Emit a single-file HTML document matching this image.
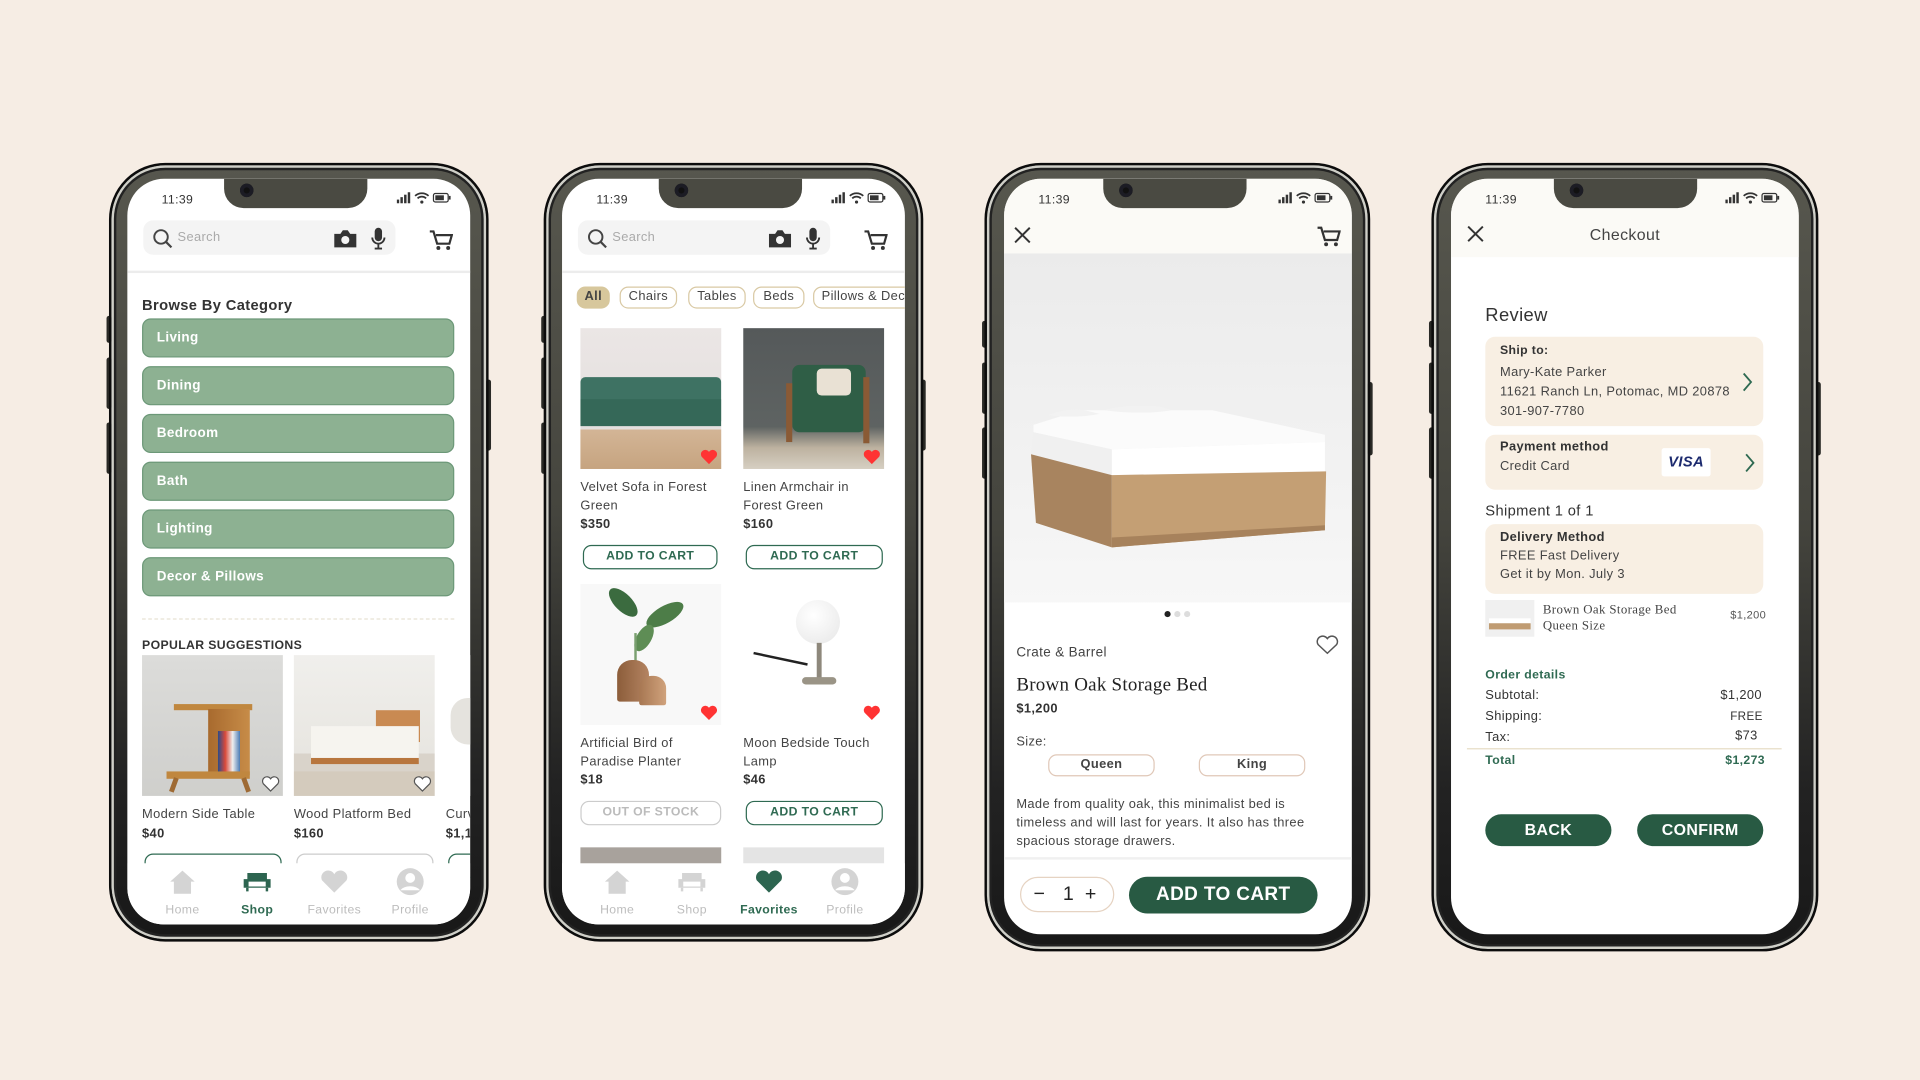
<!DOCTYPE html>
<html><head><meta charset="utf-8"><style>
*{margin:0;padding:0;box-sizing:border-box}
html,body{width:1920px;height:1080px;overflow:hidden;background:#f6ede4}
body{font-family:"Liberation Sans",sans-serif;color:#333}
#c{position:absolute;left:0;top:0;width:1568px;height:882px;transform:scale(1.22449);transform-origin:0 0}
.ph{position:absolute;border-radius:46px;background:linear-gradient(180deg,#57574e 0%,#45453e 45%,#222 80%,#181818 100%);border:2px solid #0c0c0c;box-shadow:inset 0 0 0 2px #cfcfc8,inset 0 0 0 4px #222}
.sb{position:absolute;background:#2a2a26;border-radius:2px}
.sc{position:absolute;background:#fff;border-radius:30px;overflow:hidden;letter-spacing:0.3px}
.a{position:absolute;white-space:nowrap}
.notch{position:absolute;top:0;height:24px;width:117px;background:#4a4a42;border-radius:0 0 16px 16px}
.cam{position:absolute;top:4px;width:11px;height:11px;border-radius:50%;background:#111;box-shadow:inset 0 0 0 3px #1c1c24}
.time{font-size:10px;color:#333;top:12px}
.srch{position:absolute;background:#f4f4f4;border-radius:8px;height:28px}
.gb{position:absolute;left:12px;width:255px;height:32px;background:#8db192;border:1.5px solid #6c9878;border-radius:7px;color:#fff;font-weight:bold;font-size:11px;padding:9px 0 0 11px}
.nav{position:absolute;left:0;right:0;top:559px;bottom:0;background:#fff}
.nl{position:absolute;top:33px;font-size:10px;color:#bdbdbd;transform:translateX(-50%)}
.img{position:absolute;overflow:hidden}
.pn{font-size:10.5px;color:#444;line-height:15px}
.pp{font-size:10.5px;font-weight:bold;color:#333}
.ob{position:absolute;height:20px;border:1.5px solid #2f6a52;border-radius:7px;color:#2f6a52;font-weight:bold;font-size:10px;text-align:center;line-height:17px}
.chip{position:absolute;top:88px;height:18px;border:1.5px solid #d9c9a4;border-radius:7px;font-size:10.5px;text-align:center;line-height:15px;color:#444}
.box{position:absolute;left:28px;width:227px;background:#f8efe3;border-radius:8px}
.g{color:#2f6a52}
.btn{position:absolute;height:26px;background:#285a43;color:#fff;border-radius:13px;font-weight:bold;text-align:center}
</style></head><body><div id="c">

<div class="sb" style="left:87px;top:258px;width:4px;height:22px"></div>
<div class="sb" style="left:87px;top:292px;width:4px;height:42px"></div>
<div class="sb" style="left:87px;top:345px;width:4px;height:42px"></div>
<div class="sb" style="left:397px;top:310px;width:4px;height:58px"></div>
<div class="sb" style="left:442px;top:258px;width:4px;height:22px"></div>
<div class="sb" style="left:442px;top:292px;width:4px;height:42px"></div>
<div class="sb" style="left:442px;top:345px;width:4px;height:42px"></div>
<div class="sb" style="left:752px;top:310px;width:4px;height:58px"></div>
<div class="sb" style="left:802px;top:262px;width:4px;height:22px"></div>
<div class="sb" style="left:802px;top:296px;width:4px;height:42px"></div>
<div class="sb" style="left:802px;top:349px;width:4px;height:42px"></div>
<div class="sb" style="left:1117px;top:312px;width:4px;height:60px"></div>
<div class="sb" style="left:1167px;top:262px;width:4px;height:22px"></div>
<div class="sb" style="left:1167px;top:296px;width:4px;height:42px"></div>
<div class="sb" style="left:1167px;top:349px;width:4px;height:42px"></div>
<div class="sb" style="left:1483px;top:312px;width:4px;height:60px"></div>

<!-- PHONE 1 -->
<div class="ph" style="left:89px;top:133px;width:310px;height:636px"></div>
<div class="sc" style="left:104px;top:146px;width:280px;height:609px">
 <div class="notch" style="left:79px"></div><div class="cam" style="left:92px"></div>
 <div class="a time" style="left:28px">11:39</div>
 <svg class="a" style="left:220px;top:10px" width="46" height="12" viewBox="0 0 46 12"><rect x="0" y="7" width="2" height="3" fill="#333"/><rect x="3" y="5" width="2" height="5" fill="#333"/><rect x="6" y="3" width="2" height="7" fill="#333"/><rect x="9" y="1" width="2" height="9" fill="#333"/><path d="M15 4a8 8 0 0 1 11 0M17 6a5 5 0 0 1 7 0" stroke="#333" stroke-width="1.4" fill="none"/><circle cx="20.5" cy="9" r="1.3" fill="#333"/><rect x="30" y="2" width="12" height="7" rx="1.5" fill="none" stroke="#333"/><rect x="31.5" y="3.5" width="7" height="4" fill="#333"/><rect x="42.5" y="4" width="1.5" height="3" fill="#333"/></svg>
 <div class="srch" style="left:13px;top:34px;width:206px"></div>
 <svg class="a" style="left:20px;top:40px" width="18" height="18"><circle cx="7.5" cy="7.5" r="5.5" stroke="#444" stroke-width="1.6" fill="none"/><path d="M11.5 11.5L16 16" stroke="#444" stroke-width="1.8"/></svg>
 <div class="a" style="left:41px;top:42px;font-size:10.5px;color:#aaa">Search</div>
 <svg class="a" style="left:168px;top:41px" width="20" height="16"><path d="M1 4h5l2-3h4l2 3h5v11H1z" fill="#333"/><circle cx="10" cy="9" r="3.3" fill="#f4f4f4"/></svg>
 <svg class="a" style="left:198px;top:39px" width="14" height="20"><rect x="4" y="1" width="6" height="11" rx="3" fill="#333"/><path d="M2 9a5 5 0 0 0 10 0M7 14v4M4 18h6" stroke="#333" stroke-width="1.5" fill="none"/></svg>
 <svg class="a" style="left:246px;top:41px" width="20" height="18"><path d="M1 2h3l3 10h10l2-7H6" stroke="#333" stroke-width="1.8" fill="none"/><circle cx="8" cy="15.5" r="1.6" fill="#333"/><circle cx="16" cy="15.5" r="1.6" fill="#333"/></svg>
 <div class="a" style="left:0;top:75px;width:280px;height:2px;background:#ececec"></div>
 <div class="a" style="left:12px;top:96px;font-size:12px;font-weight:bold;color:#333">Browse By Category</div>
 <div class="gb" style="top:114px">Living</div>
 <div class="gb" style="top:153px">Dining</div>
 <div class="gb" style="top:192px">Bedroom</div>
 <div class="gb" style="top:231px">Bath</div>
 <div class="gb" style="top:270px">Lighting</div>
 <div class="gb" style="top:309px">Decor &amp; Pillows</div>
 <div class="a" style="left:12px;top:359px;width:255px;border-top:1px dashed #e8e2d4"></div>
 <div class="a" style="left:12px;top:376px;font-size:10px;font-weight:bold;color:#333">POPULAR SUGGESTIONS</div>
 <div class="img" style="left:12px;top:389px;width:115px;height:115px;background:linear-gradient(#dcdcda,#cfcfcc)">
  <div class="a" style="left:26px;top:40px;width:64px;height:5px;background:#c0873f"></div>
  <div class="a" style="left:54px;top:44px;width:34px;height:54px;background:linear-gradient(90deg,#a86a2e,#c78c48)"></div>
  <div class="a" style="left:20px;top:95px;width:68px;height:6px;background:#c0873f"></div>
  <div class="a" style="left:62px;top:62px;width:18px;height:33px;background:linear-gradient(90deg,#2b4b8a,#d94a3a,#eee,#4b7bb5)"></div>
  <div class="a" style="left:24px;top:100px;width:4px;height:12px;background:#9e6a34;transform:rotate(20deg)"></div>
  <div class="a" style="left:83px;top:100px;width:4px;height:12px;background:#9e6a34;transform:rotate(-20deg)"></div>
  <svg class="a" style="left:97px;top:98px" width="16" height="14"><path d="M8 13L2 7a3.3 3.3 0 0 1 6-4 3.3 3.3 0 0 1 6 4z" fill="#fff" stroke="#555" stroke-width="1"/></svg>
 </div>
 <div class="img" style="left:136px;top:389px;width:115px;height:115px;background:linear-gradient(#f0efec 0,#e8e6e1 70%,#d9d3ca 70%)">
  <div class="a" style="left:67px;top:45px;width:36px;height:26px;background:#c98a52"></div>
  <div class="a" style="left:14px;top:58px;width:88px;height:28px;background:#f6f4ef"></div>
  <div class="a" style="left:14px;top:84px;width:88px;height:5px;background:#b8763e"></div>
  <div class="a" style="left:0;top:95px;width:115px;height:20px;background:#d4cbbd"></div>
  <svg class="a" style="left:97px;top:98px" width="16" height="14"><path d="M8 13L2 7a3.3 3.3 0 0 1 6-4 3.3 3.3 0 0 1 6 4z" fill="#fff" stroke="#555" stroke-width="1"/></svg>
 </div>
 <div class="img" style="left:260px;top:389px;width:30px;height:115px;background:#fff"><div class="a" style="left:4px;top:35px;width:30px;height:38px;border-radius:14px;background:#e5e3de"></div></div>
 <div class="a pn" style="left:12px;top:512px">Modern Side Table</div>
 <div class="a pp" style="left:12px;top:529px">$40</div>
 <div class="a pn" style="left:136px;top:512px">Wood Platform Bed</div>
 <div class="a pp" style="left:136px;top:529px">$160</div>
 <div class="a pn" style="left:260px;top:512px">Curv</div>
 <div class="a pp" style="left:260px;top:529px">$1,100</div>
 <div class="ob" style="left:14px;top:551px;width:112px"></div>
 <div class="ob" style="left:138px;top:551px;width:112px;border-color:#ccc"></div>
 <div class="ob" style="left:262px;top:551px;width:40px"></div>
 <div class="nav">
  <svg class="a" style="left:34px;top:5px" width="22" height="20"><path d="M11 1L1 10h3v10h14V10h3z" fill="#d4d4d4"/></svg>
  <div class="nl" style="left:45px">Home</div>
  <svg class="a" style="left:94px;top:6px" width="24" height="18"><path d="M4 2h16v7H4z M1 7h4v6h14V7h4v7H1z" fill="#2d6550"/><path d="M4 14v3M20 14v3" stroke="#2d6550" stroke-width="2"/></svg>
  <div class="nl g" style="left:106px;font-weight:bold">Shop</div>
  <svg class="a" style="left:157px;top:5px" width="24" height="20"><path d="M12 19L2 9a5 5 0 0 1 10-5 5 5 0 0 1 10 5z" fill="#d4d4d4"/></svg>
  <div class="nl" style="left:169px">Favorites</div>
  <svg class="a" style="left:219px;top:3px" width="24" height="24"><circle cx="12" cy="12" r="11" fill="#d4d4d4"/><circle cx="12" cy="9" r="4" fill="#fff"/><path d="M4 19a9 6 0 0 1 16 0" fill="#fff"/></svg>
  <div class="nl" style="left:231px">Profile</div>
 </div>
</div>

<!-- PHONE 2 -->
<div class="ph" style="left:444px;top:133px;width:310px;height:636px"></div>
<div class="sc" style="left:459px;top:146px;width:280px;height:609px">
 <div class="notch" style="left:79px"></div><div class="cam" style="left:92px"></div>
 <div class="a time" style="left:28px">11:39</div>
 <svg class="a" style="left:220px;top:10px" width="46" height="12" viewBox="0 0 46 12"><rect x="0" y="7" width="2" height="3" fill="#333"/><rect x="3" y="5" width="2" height="5" fill="#333"/><rect x="6" y="3" width="2" height="7" fill="#333"/><rect x="9" y="1" width="2" height="9" fill="#333"/><path d="M15 4a8 8 0 0 1 11 0M17 6a5 5 0 0 1 7 0" stroke="#333" stroke-width="1.4" fill="none"/><circle cx="20.5" cy="9" r="1.3" fill="#333"/><rect x="30" y="2" width="12" height="7" rx="1.5" fill="none" stroke="#333"/><rect x="31.5" y="3.5" width="7" height="4" fill="#333"/><rect x="42.5" y="4" width="1.5" height="3" fill="#333"/></svg>
 <div class="srch" style="left:13px;top:34px;width:206px"></div>
 <svg class="a" style="left:20px;top:40px" width="18" height="18"><circle cx="7.5" cy="7.5" r="5.5" stroke="#444" stroke-width="1.6" fill="none"/><path d="M11.5 11.5L16 16" stroke="#444" stroke-width="1.8"/></svg>
 <div class="a" style="left:41px;top:42px;font-size:10.5px;color:#aaa">Search</div>
 <svg class="a" style="left:168px;top:41px" width="20" height="16"><path d="M1 4h5l2-3h4l2 3h5v11H1z" fill="#333"/><circle cx="10" cy="9" r="3.3" fill="#f4f4f4"/></svg>
 <svg class="a" style="left:198px;top:39px" width="14" height="20"><rect x="4" y="1" width="6" height="11" rx="3" fill="#333"/><path d="M2 9a5 5 0 0 0 10 0M7 14v4M4 18h6" stroke="#333" stroke-width="1.5" fill="none"/></svg>
 <svg class="a" style="left:246px;top:41px" width="20" height="18"><path d="M1 2h3l3 10h10l2-7H6" stroke="#333" stroke-width="1.8" fill="none"/><circle cx="8" cy="15.5" r="1.6" fill="#333"/><circle cx="16" cy="15.5" r="1.6" fill="#333"/></svg>
 <div class="a" style="left:0;top:75px;width:280px;height:2px;background:#ececec"></div>
 <div class="chip" style="left:12px;width:27px;background:#d7c79c;border-color:#d7c79c;font-weight:bold">All</div>
 <div class="chip" style="left:47px;width:47px">Chairs</div>
 <div class="chip" style="left:103px;width:47px">Tables</div>
 <div class="chip" style="left:156px;width:42px">Beds</div>
 <div class="chip" style="left:205px;width:92px;text-align:left;padding-left:6px">Pillows &amp; Decor</div>
 <div class="img" style="left:15px;top:122px;width:115px;height:115px;background:linear-gradient(#ebe6e5 0,#e4dfde 72%,#d3b596 72%,#c6a480)">
  <div class="a" style="left:0;top:40px;width:115px;height:36px;background:#3e7263;border-radius:4px 4px 0 0"></div>
  <div class="a" style="left:0;top:58px;width:115px;height:22px;background:#356858"></div>
  <svg class="a" style="left:97px;top:98px" width="16" height="14"><path d="M8 13L2 7a3.3 3.3 0 0 1 6-4 3.3 3.3 0 0 1 6 4z" fill="#f33"/></svg>
 </div>
 <div class="img" style="left:148px;top:122px;width:115px;height:115px;background:linear-gradient(#55595a 0,#5e6362 70%,#bdb2a0 85%,#d6cfc2)">
  <div class="a" style="left:40px;top:30px;width:60px;height:55px;background:#2f5e46;border-radius:6px"></div>
  <div class="a" style="left:60px;top:33px;width:28px;height:22px;background:#e9e1d4;border-radius:4px"></div>
  <div class="a" style="left:35px;top:45px;width:5px;height:48px;background:#8a5a35"></div>
  <div class="a" style="left:98px;top:40px;width:5px;height:54px;background:#8a5a35"></div>
  <svg class="a" style="left:97px;top:98px" width="16" height="14"><path d="M8 13L2 7a3.3 3.3 0 0 1 6-4 3.3 3.3 0 0 1 6 4z" fill="#f33"/></svg>
 </div>
 <div class="a pn" style="left:15px;top:245px">Velvet Sofa in Forest<br>Green</div>
 <div class="a pp" style="left:15px;top:276px">$350</div>
 <div class="a pn" style="left:148px;top:245px">Linen Armchair in<br>Forest Green</div>
 <div class="a pp" style="left:148px;top:276px">$160</div>
 <div class="ob" style="left:17px;top:299px;width:110px">ADD TO CART</div>
 <div class="ob" style="left:150px;top:299px;width:112px">ADD TO CART</div>
 <div class="img" style="left:15px;top:331px;width:115px;height:115px;background:#f8f8f8">
  <div class="a" style="left:20px;top:8px;width:30px;height:14px;background:#3b6b3f;border-radius:50%;transform:rotate(45deg)"></div>
  <div class="a" style="left:52px;top:18px;width:34px;height:14px;background:#4d7d48;border-radius:50%;transform:rotate(-30deg)"></div>
  <div class="a" style="left:40px;top:38px;width:24px;height:12px;background:#5e8d55;border-radius:50%;transform:rotate(-60deg)"></div>
  <div class="a" style="left:44px;top:40px;width:2px;height:50px;background:#7aa070"></div>
  <div class="a" style="left:30px;top:62px;width:26px;height:34px;background:linear-gradient(90deg,#8c5d3a,#b48462);border-radius:12px 12px 2px 2px"></div>
  <div class="a" style="left:48px;top:75px;width:22px;height:24px;background:linear-gradient(90deg,#a77752,#d0a27c);border-radius:10px 10px 2px 2px"></div>
  <svg class="a" style="left:97px;top:98px" width="16" height="14"><path d="M8 13L2 7a3.3 3.3 0 0 1 6-4 3.3 3.3 0 0 1 6 4z" fill="#f33"/></svg>
 </div>
 <div class="img" style="left:148px;top:331px;width:115px;height:115px;background:#fff">
  <div class="a" style="left:43px;top:13px;width:36px;height:36px;border-radius:50%;background:radial-gradient(circle at 40% 35%,#fff,#e6e6e6)"></div>
  <div class="a" style="left:60px;top:48px;width:4px;height:30px;background:#8e887c"></div>
  <div class="a" style="left:48px;top:76px;width:28px;height:6px;border-radius:3px;background:#9a9486"></div>
  <div class="a" style="left:8px;top:60px;width:45px;height:1.5px;background:#222;transform:rotate(12deg)"></div>
  <svg class="a" style="left:97px;top:98px" width="16" height="14"><path d="M8 13L2 7a3.3 3.3 0 0 1 6-4 3.3 3.3 0 0 1 6 4z" fill="#f33"/></svg>
 </div>
 <div class="a pn" style="left:15px;top:454px">Artificial Bird of<br>Paradise Planter</div>
 <div class="a pp" style="left:15px;top:485px">$18</div>
 <div class="a pn" style="left:148px;top:454px">Moon Bedside Touch<br>Lamp</div>
 <div class="a pp" style="left:148px;top:485px">$46</div>
 <div class="ob" style="left:15px;top:508px;width:115px;border-color:#ccc;color:#bbb">OUT OF STOCK</div>
 <div class="ob" style="left:150px;top:508px;width:112px">ADD TO CART</div>
 <div class="img" style="left:15px;top:546px;width:115px;height:20px;background:#a8a29c"></div>
 <div class="img" style="left:148px;top:546px;width:115px;height:20px;background:#e4e4e4"></div>
 <div class="nav">
  <svg class="a" style="left:34px;top:5px" width="22" height="20"><path d="M11 1L1 10h3v10h14V10h3z" fill="#d4d4d4"/></svg>
  <div class="nl" style="left:45px">Home</div>
  <svg class="a" style="left:94px;top:6px" width="24" height="18"><path d="M4 2h16v7H4z M1 7h4v6h14V7h4v7H1z" fill="#d4d4d4"/><path d="M4 14v3M20 14v3" stroke="#d4d4d4" stroke-width="2"/></svg>
  <div class="nl" style="left:106px">Shop</div>
  <svg class="a" style="left:157px;top:5px" width="24" height="20"><path d="M12 19L2 9a5 5 0 0 1 10-5 5 5 0 0 1 10 5z" fill="#2d6550"/></svg>
  <div class="nl g" style="left:169px;font-weight:bold">Favorites</div>
  <svg class="a" style="left:219px;top:3px" width="24" height="24"><circle cx="12" cy="12" r="11" fill="#d4d4d4"/><circle cx="12" cy="9" r="4" fill="#fff"/><path d="M4 19a9 6 0 0 1 16 0" fill="#fff"/></svg>
  <div class="nl" style="left:231px">Profile</div>
 </div>
</div>

<!-- PHONE 3 -->
<div class="ph" style="left:804px;top:133px;width:315px;height:644px"></div>
<div class="sc" style="left:820px;top:146px;width:284px;height:617px">
 <div class="a" style="left:0;top:0;width:284px;height:61px;background:#fbfaf6"></div>
 <div class="notch" style="left:81px;background:#4a4a42"></div><div class="cam" style="left:94px"></div>
 <div class="a time" style="left:28px">11:39</div>
 <svg class="a" style="left:224px;top:10px" width="46" height="12" viewBox="0 0 46 12"><rect x="0" y="7" width="2" height="3" fill="#333"/><rect x="3" y="5" width="2" height="5" fill="#333"/><rect x="6" y="3" width="2" height="7" fill="#333"/><rect x="9" y="1" width="2" height="9" fill="#333"/><path d="M15 4a8 8 0 0 1 11 0M17 6a5 5 0 0 1 7 0" stroke="#333" stroke-width="1.4" fill="none"/><circle cx="20.5" cy="9" r="1.3" fill="#333"/><rect x="30" y="2" width="12" height="7" rx="1.5" fill="none" stroke="#333"/><rect x="31.5" y="3.5" width="7" height="4" fill="#333"/><rect x="42.5" y="4" width="1.5" height="3" fill="#333"/></svg>
 <svg class="a" style="left:8px;top:39px" width="14" height="14"><path d="M1 1l12 12M13 1L1 13" stroke="#333" stroke-width="1.6"/></svg>
 <svg class="a" style="left:255px;top:38px" width="20" height="18"><path d="M1 2h3l3 10h10l2-7H6" stroke="#333" stroke-width="1.8" fill="none"/><circle cx="8" cy="15.5" r="1.6" fill="#333"/><circle cx="16" cy="15.5" r="1.6" fill="#333"/></svg>
 <div class="a" style="left:0;top:61px;width:284px;height:285px;background:linear-gradient(#ebebeb,#f3f3f3 70%,#f7f7f7)">
  <svg class="a" style="left:0;top:0" width="284" height="285" viewBox="0 0 284 285">
   <path d="M24 140L62 128 170 128 262 148 262 154 88 160 24 146z" fill="#fbfbfb"/>
   <path d="M36 132q15-6 30-4l12 3q-20 4-42 1z" fill="#f2f2f2"/>
   <path d="M82 128q15-5 45-3l10 3q-25 4-55 0z" fill="#f2f2f2"/>
   <path d="M24 146L88 160 88 181 22 164z" fill="#f0f0f0"/>
   <path d="M88 160L262 154 262 178 88 181z" fill="#ffffff"/>
   <path d="M22 164L88 181 88 240 26 220z" fill="#a8845f"/>
   <path d="M88 181L263 178 262 226 88 240z" fill="#c49f74"/>
   <path d="M88 232L262 222 262 226 88 240z" fill="#a7825c"/>
  </svg>
 </div>
 <div class="a" style="left:131px;top:353px;width:5px;height:5px;border-radius:50%;background:#222"></div>
 <div class="a" style="left:139px;top:353px;width:5px;height:5px;border-radius:50%;background:#ddd"></div>
 <div class="a" style="left:147px;top:353px;width:5px;height:5px;border-radius:50%;background:#ddd"></div>
 <div class="a" style="left:10px;top:381px;font-size:11px;color:#444">Crate &amp; Barrel</div>
 <svg class="a" style="left:254px;top:372px" width="20" height="17"><path d="M10 15.5L2.5 8.5a4 4 0 0 1 7.5-5 4 4 0 0 1 7.5 5z" fill="none" stroke="#555" stroke-width="1.2"/></svg>
 <div class="a" style="left:10px;top:405px;font-size:15.5px;font-family:'Liberation Serif',serif;color:#222;letter-spacing:0.2px">Brown Oak Storage Bed</div>
 <div class="a pp" style="left:10px;top:427px;font-size:10.5px">$1,200</div>
 <div class="a" style="left:10px;top:454px;font-size:10.5px;color:#444">Size:</div>
 <div class="chip" style="left:36px;top:470px;width:87px;border-color:#e0c8b8;font-weight:bold;font-size:10.5px">Queen</div>
 <div class="chip" style="left:159px;top:470px;width:87px;border-color:#e0c8b8;font-weight:bold;font-size:10.5px">King</div>
 <div class="a" style="left:10px;top:504px;font-size:10.5px;line-height:15px;color:#444;white-space:normal;width:258px">Made from quality oak, this minimalist bed is timeless and will last for years. It also has three spacious storage drawers.</div>
 <div class="a" style="left:0;top:554px;width:284px;height:2px;background:#f0f0f0"></div>
 <div class="a" style="left:13px;top:570px;width:77px;height:29px;border:1.2px solid #e6d3c2;border-radius:15px;font-size:16px;color:#222;line-height:27px"><span style="position:absolute;left:10px">&minus;</span><span style="position:absolute;left:34px">1</span><span style="position:absolute;left:52px">+</span></div>
 <div class="btn" style="left:102px;top:570px;width:154px;height:30px;border-radius:15px;font-size:15.5px;line-height:30px">ADD TO CART</div>
</div>

<!-- PHONE 4 -->
<div class="ph" style="left:1169px;top:133px;width:316px;height:644px"></div>
<div class="sc" style="left:1185px;top:146px;width:284px;height:617px">
 <div class="a" style="left:0;top:0;width:284px;height:64px;background:#fbfaf6"></div>
 <div class="notch" style="left:84px;background:#4a4a42"></div><div class="cam" style="left:97px"></div>
 <div class="a time" style="left:28px">11:39</div>
 <svg class="a" style="left:224px;top:10px" width="46" height="12" viewBox="0 0 46 12"><rect x="0" y="7" width="2" height="3" fill="#333"/><rect x="3" y="5" width="2" height="5" fill="#333"/><rect x="6" y="3" width="2" height="7" fill="#333"/><rect x="9" y="1" width="2" height="9" fill="#333"/><path d="M15 4a8 8 0 0 1 11 0M17 6a5 5 0 0 1 7 0" stroke="#333" stroke-width="1.4" fill="none"/><circle cx="20.5" cy="9" r="1.3" fill="#333"/><rect x="30" y="2" width="12" height="7" rx="1.5" fill="none" stroke="#333"/><rect x="31.5" y="3.5" width="7" height="4" fill="#333"/><rect x="42.5" y="4" width="1.5" height="3" fill="#333"/></svg>
 <svg class="a" style="left:13px;top:38px" width="14" height="14"><path d="M1 1l12 12M13 1L1 13" stroke="#333" stroke-width="1.6"/></svg>
 <div class="a" style="left:0;width:284px;text-align:center;top:38px;font-size:13px;color:#444">Checkout</div>
 <div class="a" style="left:28px;top:103px;font-size:15px;color:#333">Review</div>
 <div class="box" style="top:129px;height:73px"></div>
 <div class="a" style="left:40px;top:135px;font-size:10px;font-weight:bold;color:#333">Ship to:</div>
 <div class="a" style="left:40px;top:150px;font-size:10.5px;line-height:16px;color:#444">Mary-Kate Parker<br>11621 Ranch Ln, Potomac, MD 20878<br>301-907-7780</div>
 <svg class="a" style="left:237px;top:158px" width="10" height="16"><path d="M2 1l6 7-6 7" stroke="#2f6a52" stroke-width="1.5" fill="none"/></svg>
 <div class="box" style="top:209px;height:45px"></div>
 <div class="a" style="left:40px;top:213px;font-size:10.5px;font-weight:bold;color:#333">Payment method</div>
 <div class="a" style="left:40px;top:229px;font-size:10.5px;color:#444">Credit Card</div>
 <div class="a" style="left:172px;top:220px;width:40px;height:23px;background:#fff;border-radius:2px;font-size:12px;font-weight:bold;font-style:italic;color:#1c2a6e;text-align:center;line-height:23px">VISA</div>
 <svg class="a" style="left:239px;top:224px" width="10" height="16"><path d="M2 1l6 7-6 7" stroke="#2f6a52" stroke-width="1.5" fill="none"/></svg>
 <div class="a" style="left:28px;top:264px;font-size:12px;color:#333">Shipment 1 of 1</div>
 <div class="box" style="top:282px;height:57px"></div>
 <div class="a" style="left:40px;top:287px;font-size:10.5px;font-weight:bold;color:#333">Delivery Method</div>
 <div class="a" style="left:40px;top:301px;font-size:10.5px;line-height:15px;color:#444">FREE Fast Delivery<br>Get it by Mon. July 3</div>
 <div class="a" style="left:28px;top:344px;width:40px;height:30px;background:#f0f0f0;overflow:hidden"><div class="a" style="left:3px;top:15px;width:34px;height:4px;background:#fff"></div><div class="a" style="left:3px;top:19px;width:34px;height:5px;background:#c09c72"></div></div>
 <div class="a" style="left:75px;top:346px;font-size:10.5px;line-height:13px;font-family:'Liberation Serif',serif;color:#444">Brown Oak Storage Bed<br>Queen Size</div>
 <div class="a" style="left:228px;top:351px;font-size:9px;color:#555">$1,200</div>
 <div class="a g" style="left:28px;top:400px;font-size:10px;font-weight:bold">Order details</div>
 <div class="a" style="left:28px;top:416px;font-size:10.5px;color:#333">Subtotal:</div><div class="a" style="left:220px;top:416px;font-size:10.5px;color:#333">$1,200</div>
 <div class="a" style="left:28px;top:433px;font-size:10.5px;color:#333">Shipping:</div><div class="a" style="left:228px;top:434px;font-size:9.5px;color:#333">FREE</div>
 <div class="a" style="left:28px;top:450px;font-size:10.5px;color:#333">Tax:</div><div class="a" style="left:232px;top:449px;font-size:10.5px;color:#333">$73</div>
 <div class="a" style="left:13px;top:465px;width:257px;height:1px;background:#e6dcc4"></div>
 <div class="a g" style="left:28px;top:470px;font-size:10px;font-weight:bold">Total</div>
 <div class="a g" style="left:224px;top:470px;font-size:10px;font-weight:bold">$1,273</div>
 <div class="btn" style="left:28px;top:519px;width:103px;font-size:13px;line-height:26px">BACK</div>
 <div class="btn" style="left:152px;top:519px;width:103px;font-size:13px;line-height:26px">CONFIRM</div>
</div>

</div></body></html>
